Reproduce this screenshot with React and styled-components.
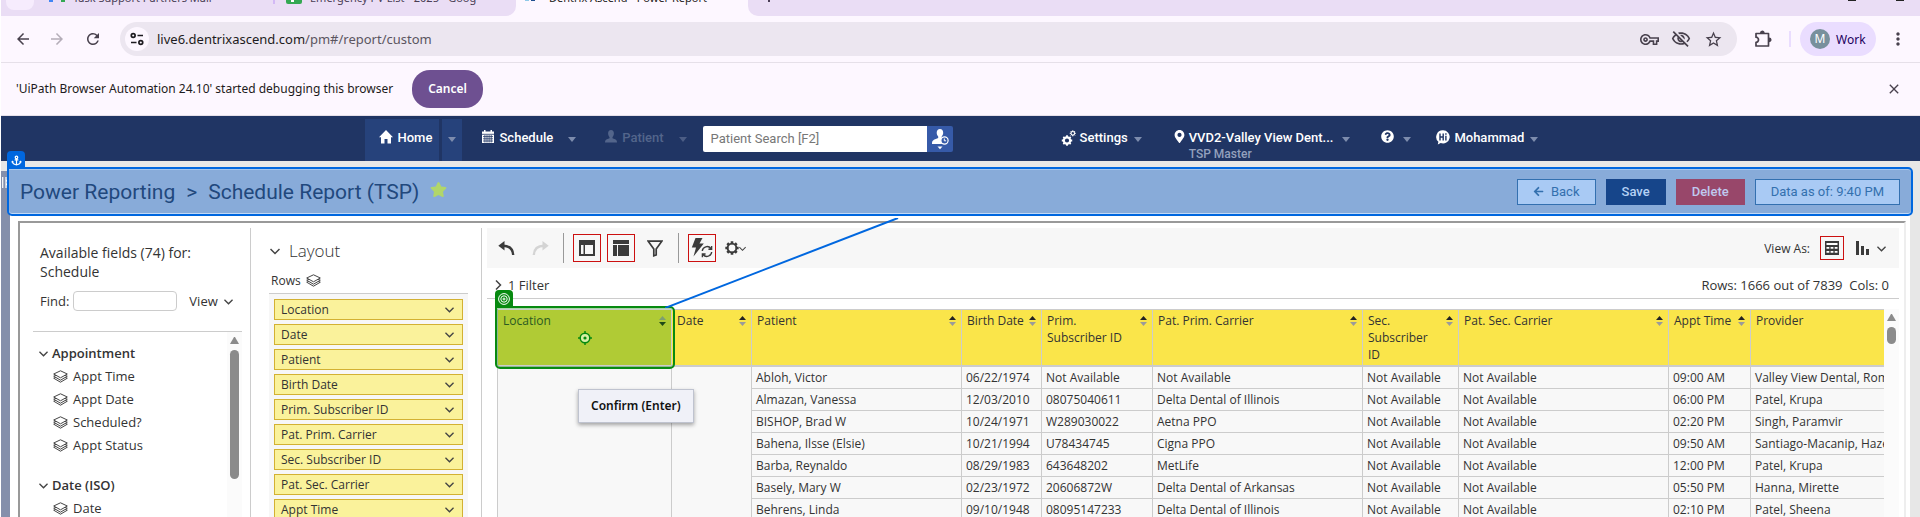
import React from 'react';
import styled, { createGlobalStyle, css } from 'styled-components';
import {
  MdArrowBack, MdArrowForward, MdRefresh, MdOutlineVpnKey, MdOutlineVisibilityOff,
  MdStarOutline, MdMoreVert, MdClose,
} from 'react-icons/md';
import { FaMapMarkerAlt, FaQuestionCircle, FaAnchor, FaStar, FaArrowLeft } from 'react-icons/fa';

const chromeFont = '"Noto Sans", "Open Sans", sans-serif';
const navFont = 'Roboto, "Liberation Sans", sans-serif';
const bodyFont = '"Open Sans", "Noto Sans", sans-serif';

const GlobalStyle = createGlobalStyle`
  * { box-sizing: border-box; }
  body { margin: 0; background: #fff; overflow: hidden; }
  button, input { font: inherit; color: inherit; }
  button { border: 0; padding: 0; background: none; cursor: pointer; }
  ul { list-style: none; margin: 0; padding: 0; }
  svg { display: block; flex: none; }
`;

const Screen = styled.div`
  display: flex;
  flex-direction: column;
  height: 100vh;
  padding-left: 1px;
  overflow: hidden;
  font-family: ${bodyFont};
  font-size: 12px;
  color: #333;
`;

/* ---------- browser window ---------- */

const TabStrip = styled.div`
  display: flex;
  flex: none;
  height: 16px;
  overflow: hidden;
  background: #fdf7ff;
  font: 11px/16px ${chromeFont};
  color: #3b3040;
`;

const TabGroup = styled.div`
  display: flex;
  align-items: flex-start;
  background: #eaddf5;
  ${(p) => (p.$grow ? css`flex: 1; border-bottom-left-radius: 10px; justify-content: space-between;` : css`width: 515px; border-bottom-right-radius: 10px;`)}
`;

const TabSearch = styled.button`
  width: 28px;
  height: 10px;
  margin-left: 5px;
  border-radius: 0 0 8px 8px;
  background: #f6ecfd;
`;

const Tab = styled.div`
  display: flex;
  gap: 8px;
  width: ${(p) => p.$width}px;
  padding-left: ${(p) => p.$pad}px;
  overflow: hidden;
  white-space: nowrap;
  color: ${(p) => (p.$active ? '#1d1b20' : '#4a3d55')};

  span { margin-top: -10px; }
  svg { margin-top: -12px; }
`;

const TabDivider = styled.i`
  width: 2px;
  height: 4px;
  background: #d3b9f5;
`;

const WindowButtons = styled.div`
  display: flex;
  gap: 40px;
  padding-right: 16px;
  i { width: 8px; height: 1px; background: #222; }
`;

const NewTab = styled.button`
  width: 2px;
  height: 2px;
  margin-left: 20px;
  background: #4a3d55;
`;

const BrowserBar = styled.div`
  display: flex;
  flex: none;
  align-items: center;
  height: 47px;
  padding-left: 5px;
  background: #fdf7ff;
  border-bottom: 1px solid #e6e0e9;
  font-family: ${chromeFont};
`;

const BrowserButton = styled.button`
  display: flex;
  align-items: center;
  justify-content: center;
  width: ${(p) => p.$width || 36}px;
  height: 34px;
  color: ${(p) => (p.$muted ? '#b4adb8' : '#48414d')};
`;

const AddressBar = styled.div`
  display: flex;
  flex: 1;
  align-items: center;
  height: 34px;
  margin-left: 9px;
  padding: 0 8px 0 5px;
  border-radius: 17px;
  background: #ece6f0;
`;

const SiteInfo = styled.button`
  display: flex;
  align-items: center;
  justify-content: center;
  width: 24px;
  height: 24px;
  margin-right: 8px;
  border-radius: 12px;
  background: #fdf7ff;
  color: #1d1b20;
`;

const Address = styled.div`
  flex: 1;
  font-size: 13px;
  line-height: 20px;
  color: #5b5560;
  b { font-weight: 400; color: #1d1b20; }
`;

const BarDivider = styled.i`
  width: 2px;
  height: 16px;
  margin-right: 9px;
  background: #eaddff;
`;

const Profile = styled.button`
  display: flex;
  align-items: center;
  gap: 6px;
  width: 76px;
  height: 34px;
  padding-left: 10px;
  border-radius: 17px;
  background: #eaddff;
  color: #21005d;
  font-size: 12px;
`;

const Avatar = styled.span`
  width: 20px;
  height: 20px;
  border-radius: 10px;
  background: #78909c;
  color: #fff;
  line-height: 20px;
`;

const InfoBar = styled.div`
  display: flex;
  flex: none;
  align-items: center;
  height: 53px;
  padding: 0 12px 0 15px;
  background: #fdf7ff;
  border-bottom: 1px solid #e6e0e9;
  font: 12px/20px ${chromeFont};
  color: #1d1b20;
`;

const CancelButton = styled.button`
  height: 38px;
  margin: 0 auto 0 19px;
  padding: 0 16px;
  border-radius: 18px;
  background: #6e5091;
  color: #fff;
  font-weight: 600;
`;

/* ---------- application header ---------- */

const Nav = styled.nav`
  display: flex;
  flex: none;
  justify-content: center;
  height: 45px;
  background: #203564;
  font: 500 13px/16px ${navFont};
  color: #fff;
`;

const NavInner = styled.div`
  display: flex;
  flex: 0 1 1192px;
  padding-top: 3px;
`;

const NavItem = styled.a`
  display: flex;
  align-items: flex-start;
  gap: ${(p) => p.$gap || 5}px;
  margin-left: ${(p) => p.$before || 0}px;
  padding-top: 11px;
  white-space: nowrap;
  color: ${(p) => (p.$muted ? '#53658b' : '#fff')};
  text-decoration: none;
  ${(p) => p.$current && css`width: 74px; padding-left: 14px; background: #26427b;`}

  small { display: block; font-size: 12px; line-height: 16px; color: #93a0bd; }
`;

const NavCaret = styled.button`
  display: flex;
  justify-content: center;
  width: 20px;
  margin-left: ${(p) => p.$before || 0}px;
  padding-top: 18px;
  background: ${(p) => (p.$current ? '#26427b' : 'none')};

  &::after {
    content: '';
    border: 4px solid transparent;
    border-top: 5px solid ${(p) => (p.$muted ? '#4c5d85' : '#7d8cad')};
    border-bottom: 0;
  }
`;

const Search = styled.div`
  display: flex;
  height: 26px;
  margin: 7px 0 0 10px;
`;

const SearchInput = styled.input`
  width: 224px;
  padding: 0 8px;
  border: 0;
  border-radius: 2px 0 0 2px;
  background: #fff;
  font-size: 13px;
  font-weight: 400;
  color: #333;
  &::placeholder { color: #777; }
`;

const SearchButton = styled.button`
  width: 26px;
  border-radius: 0 2px 2px 0;
  background: #365aa8;
`;

/* ---------- workspace ---------- */

const Workspace = styled.div`
  display: flex;
  flex: 1;
  min-height: 0;
  background: #e7e7e7;
`;

const Rail = styled.aside`
  width: 9px;
  flex: none;
  margin-top: 10px;
  padding: 6px 0 0 1px;
  background: #848fab;
`;

const Main = styled.main`
  display: flex;
  flex: 1;
  flex-direction: column;
  min-width: 0;
  margin: 6px 10px 0 0;
  background: #fff;
`;

const TitleBar = styled.header`
  position: relative;
  display: flex;
  flex: none;
  align-items: center;
  gap: 10px;
  height: 49px;
  margin: 0 -3px;
  padding: 0 11px;
  border: 2px solid #0067df;
  border-radius: 0 5px 5px 5px;
  background: #88abd9;
  box-shadow: inset 0 1px 0 #a9c6ea, inset 0 -1px 0 #c4daf6;
  font: 13px/16px ${navFont};
`;

const Badge = styled.span`
  position: absolute;
  left: -2px;
  bottom: 100%;
  display: flex;
  align-items: center;
  justify-content: center;
  width: 18px;
  height: 18px;
  border-radius: 4px 4px 0 0;
  background: ${(p) => p.$color};
  color: #fff;
`;

const Title = styled.h1`
  display: flex;
  gap: 11px;
  margin: 0 auto 0 0;
  font-size: 21px;
  line-height: 28px;
  font-weight: 400;
  color: #21487d;
  svg { color: #b1d66a; margin-top: 3px; }
`;

const tones = {
  plain: css`border: 1px solid #3370b0; background: #a9caf4; color: #3370ae;`,
  save: css`background: #16458a; color: #b5d1f5; font-weight: 500;`,
  remove: css`background: #98476a; color: #bfc9ef; font-weight: 500;`,
};

const ActionButton = styled.button`
  display: flex;
  align-items: center;
  gap: 7px;
  height: 26px;
  padding: 0 ${(p) => (p.$tone === 'plain' ? 15 : 16)}px;
  ${(p) => tones[p.$tone]}
`;

const Frame = styled.div`
  display: flex;
  flex: 1;
  min-height: 0;
  margin: 5px 4px 0 8px;
  padding: 5px 5px 0 13px;
  border: 2px solid #999;
  border-right-color: #eee;
  border-bottom: 0;
`;

const FieldsPanel = styled.section`
  width: 217px;
  flex: none;
  padding-right: 8px;
`;

const PanelTitle = styled.h2`
  margin: 0;
  padding: 15px 0 0 7px;
  font-size: 14px;
  line-height: 19px;
  font-weight: 400;
`;

const FindRow = styled.div`
  display: flex;
  align-items: center;
  height: 50px;
  padding: 0 0 10px 7px;
  font-size: 13px;
`;

const FindInput = styled.input`
  width: 104px;
  height: 20px;
  margin: 0 12px 0 4px;
  border: 1px solid #ccc;
  border-radius: 4px;
`;

const ViewButton = styled.button`
  display: flex;
  align-items: center;
  gap: 6px;
`;

const FieldTree = styled.div`
  display: flex;
  height: 200px;
  border-top: 1px solid #ccc;
`;

const Groups = styled.div`
  flex: 1;
  padding-top: 10px;
`;

const Group = styled.div`
  margin-bottom: 17px;
  font-size: 13px;
  line-height: 23px;
  h3 {
    display: flex;
    align-items: center;
    gap: 4px;
    margin: 0 0 0 6px;
    font-size: 13px;
    font-weight: 600;
  }
  li { display: flex; align-items: center; gap: 5px; padding-left: 20px; }
`;

const Scroller = styled.div`
  width: 15px;
  flex: none;
  padding: 5px 3px;
  background: #fbfbfb;
  &::before {
    content: '';
    display: block;
    border: 4px solid transparent;
    border-bottom: 7px solid #8b8b8b;
    border-top: 0;
  }
  &::after {
    content: '';
    display: block;
    width: 9px;
    height: ${(p) => p.$thumb}px;
    margin-top: 6px;
    border-radius: 5px;
    background: #8b8b8b;
  }
`;

const LayoutPanel = styled.section`
  display: flex;
  flex: none;
  flex-direction: column;
  width: 232px;
  padding: 0 13px 0 18px;
  border: solid #ccc;
  border-width: 0 1px;
`;

const LayoutTitle = styled.h2`
  display: flex;
  flex: none;
  align-items: center;
  gap: 9px;
  height: 36px;
  margin: 0;
  padding: 10px 0 0 1px;
  font-size: 17px;
  line-height: 26px;
  font-weight: 300;
`;

const RowsLabel = styled.div`
  display: flex;
  flex: none;
  align-items: center;
  gap: 5px;
  height: 30px;
  padding: 4px 0 0 2px;
  border-bottom: 1px solid #ccc;
`;

const PillList = styled.ul`
  flex: 1;
  padding: 5px;
  background: #f7f7f7;
`;

const Pill = styled.button`
  display: flex;
  align-items: center;
  justify-content: space-between;
  width: 100%;
  height: 21px;
  margin-bottom: 4px;
  padding: 0 8px 0 6px;
  border: 1px solid #d3b132;
  background: #faf29b;
`;

const Report = styled.section`
  flex: 1;
  min-width: 0;
  padding-left: 5px;
`;

const Toolbar = styled.div`
  display: flex;
  align-items: center;
  height: 40px;
  padding: 0 13px 0 11px;
  background: #f7f7f7;
`;

const Tool = styled.button`
  display: flex;
  align-items: center;
  justify-content: center;
  width: ${(p) => p.$size || 28}px;
  height: ${(p) => p.$size || 28}px;
  margin-left: ${(p) => p.$before || 0}px;
  border: 1px solid ${(p) => (p.$on ? '#cc1010' : 'transparent')};
  color: #3b3b3b;
`;

const ToolSeparator = styled.i`
  width: 1px;
  height: 30px;
  margin: 0 9px 0 ${(p) => p.$before || 9}px;
  background: #999;
`;

const ViewAs = styled.div`
  display: flex;
  align-items: center;
  margin-left: auto;
`;

const FilterRow = styled.div`
  display: flex;
  align-items: center;
  justify-content: space-between;
  height: 31px;
  padding: 4px 10px 0 6px;
  border-bottom: 1px solid #ccc;
  font-size: 13px;
  white-space: pre;
`;

const FilterToggle = styled.button`
  display: flex;
  align-items: center;
  gap: 5px;
`;

const Grid = styled.div`
  display: flex;
  padding: 10px 0 0 10px;
`;

const Table = styled.table`
  flex: 1;
  min-width: 0;
  width: 100%;
  table-layout: fixed;
  border-collapse: separate;
  border-spacing: 0;
  line-height: 17px;
`;

const Th = styled.th`
  position: relative;
  height: 58px;
  padding: 2px 5px 0;
  border: solid #ccc;
  border-width: 1px 0 2px 1px;
  background: ${(p) => (p.$target ? '#b0cb35' : '#fae54a')};
  color: ${(p) => (p.$target ? '#2b5a22' : '#333')};
  font-weight: 400;
  text-align: left;
  vertical-align: top;
`;

const ThContent = styled.div`
  display: flex;
  justify-content: space-between;
  gap: 5px;
  svg { margin-top: 4px; }
`;

const Td = styled.td`
  height: 22px;
  padding: 0 0 0 4px;
  border: solid #ccc;
  border-width: 0 0 1px 1px;
  background: #f8f8f8;
  overflow: hidden;
  white-space: nowrap;
`;

const TargetOutline = styled.div`
  position: absolute;
  inset: -4px -4px -4px -3px;
  z-index: 2;
  display: flex;
  align-items: center;
  justify-content: center;
  border: 2px solid #078a10;
  border-radius: 0 5px 5px 5px;
  box-shadow: inset 0 1px 0 #a9d7a9, inset 0 -1px 0 #8fb88f, inset 1px 0 0 #8fb88f;
`;

const Connector = styled.svg`
  position: absolute;
  left: 168px;
  bottom: 100%;
`;

const Tooltip = styled.div`
  position: absolute;
  left: 81px;
  top: 81px;
  padding: 8px 12px;
  border: 1px solid #bfc3cf;
  background: #f0f1f8;
  box-shadow: 0 2px 4px rgba(0, 0, 0, 0.35);
  font: 600 12px/16px ${chromeFont};
  color: #111;
  white-space: nowrap;
`;

/* ---------- drawings ---------- */

const Chevron = ({ size = 9, right }) => (
  <svg width={size} height={size} viewBox="0 0 10 10" fill="none" stroke="#444" strokeWidth="1.5">
    <path d={right ? 'M3 0.5 7.5 5 3 9.5' : 'M0.5 3 5 7.5 9.5 3'} />
  </svg>
);

const Layers = () => (
  <svg width="15" height="13" viewBox="0 0 15 13" fill="#fff" stroke="#444" strokeWidth="1">
    <path d="M.7 8.2 7.5 12.2 14.3 8.2 7.5 5.4z" />
    <path d="M.7 6.2 7.5 10.2 14.3 6.2 7.5 3.4z" />
    <path d="M.7 4 7.5 7.8 14.3 4 7.5 .8z" />
  </svg>
);

const SortArrows = ({ down }) => (
  <svg width="7" height="10" viewBox="0 0 7 10">
    <path d="M0 4 3.5 0 7 4z" fill={down ? '#7d9f70' : '#222'} />
    <path d="M0 6 3.5 10 7 6z" fill={down ? '#1f4a17' : '#9a9a9a'} />
  </svg>
);

const Tune = () => (
  <svg width="14" height="14" viewBox="0 0 14 14" fill="none" stroke="currentColor" strokeWidth="1.7">
    <circle cx="3.2" cy="3.5" r="1.9" />
    <path d="M7.5 3.5H13M1 10.5h5.5" />
    <circle cx="10.8" cy="10.5" r="1.9" />
  </svg>
);

const Extension = () => (
  <svg width="18" height="18" viewBox="0 0 18 18" fill="none" stroke="currentColor" strokeWidth="1.7" strokeLinejoin="round">
    <path d="M2 3.500h12.500V16H2v-3.700c1.500 0 2.500-1.100 2.500-2.500S3.500 7.200 2 7.200z" />
    <path d="M6.800 3a1.500 1.700 0 0 1 3 0zM15 8.300a1.700 1.500 0 0 1 0 3z" fill="currentColor" />
  </svg>
);

const House = () => (
  <svg width="14" height="14" viewBox="0 0 14 14" fill="#fff">
    <path d="M7 0 14 7.300h-2V13.500H8.500V9h-3v4.500H2V7.300H0z" />
  </svg>
);

const Person = () => (
  <svg width="12" height="13" viewBox="0 0 12 13" fill="currentColor">
    <path d="M6 0c1.900 0 2.900 1.400 2.900 3.400 0 1.600-.7 2.800-1.400 3.500v1.300c1.500.8 4.100 1.200 4.300 2.800L12 12.500H0L.2 11c.2-1.600 2.800-2 4.300-2.800V6.900C3.800 6.200 3.100 5 3.100 3.400 3.100 1.400 4.100 0 6 0z" />
  </svg>
);

const Calendar = () => (
  <svg width="12" height="13" viewBox="0 0 12 13">
    <path fill="#fff" d="M0 1.5h2V0h1.5v1.5h5V0H10v1.5h2V13H0z" />
    <path stroke="#203564" strokeWidth=".8" d="M0 4.3h12M1 6.6h10M1 8.8h10M1 11h10M2.9 5v7.5M5 5v7.5M7.1 5v7.5M9.2 5v7.5" />
  </svg>
);

const gearPath = (cx, cy, r, teeth) =>
  Array.from({ length: teeth }, (_, i) => {
    const a = (i * 2 * Math.PI) / teeth;
    const x = Math.cos(a);
    const y = Math.sin(a);
    return `M${cx + x * r * 0.8} ${cy + y * r * 0.8}L${cx + x * r * 1.45} ${cy + y * r * 1.45}`;
  }).join('');

const Cogs = () => (
  <svg width="15" height="16" viewBox="0 0 15 16" fill="none" stroke="#fff">
    <circle cx="6" cy="10.5" r="3.2" strokeWidth="2.2" />
    <path d={gearPath(6, 10.5, 3.6, 8)} strokeWidth="1.8" />
    <circle cx="11.8" cy="3.3" r="1.8" strokeWidth="1.1" />
    <path d={gearPath(11.8, 3.3, 2.1, 8)} strokeWidth="1" />
  </svg>
);

const Gear = () => (
  <svg width="14" height="14" viewBox="0 0 14 14" fill="none" stroke="#3b3b3b">
    <circle cx="7" cy="7" r="4.4" strokeWidth="1.9" />
    <path d={gearPath(7, 7, 4.6, 8)} strokeWidth="2.6" />
  </svg>
);

const HiBubble = () => (
  <svg width="14" height="15" viewBox="0 0 14 15">
    <path fill="#fff" d="M7 .3a6.7 6.6 0 1 1-2.3 12.8L1.8 14.6l.6-2.8A6.6 6.6 0 0 1 7 .3z" />
    <path fill="none" stroke="#203564" strokeWidth="1.4" d="M4 3.5v7M7.2 3.5v7M4 7h3.2M9.9 5.8v4.7M9.9 3.3v1.4" />
  </svg>
);

const PatientClock = () => (
  <svg width="26" height="26" viewBox="0 0 26 26">
    <path fill="#fff" d="M13 3c2 0 3.200 1.500 3.200 3.700 0 1.800-.9 3-1.500 3.800v1.500c1.500.800 3.300 1.300 4.300 2.500V18H5c0-3.500 1-4 6.200-6v-1.500c-.7-.8-1.500-2-1.500-3.800C9.700 4.500 11 3 13 3z" />
    <circle cx="17.500" cy="14.500" r="3.600" fill="#365aa8" stroke="#fff" strokeWidth="1.200" />
    <path fill="none" stroke="#fff" d="M17.300 12.500v2.300h1.800" />
    <path fill="#fff" d="M10.500 20.500h5L13 23.200z" />
  </svg>
);

const Undo = ({ color, flip }) => (
  <svg width="17" height="15" viewBox="0 0 17 15">
    <g transform={flip ? 'matrix(-1 0 0 1 17 0)' : undefined}>
      <path d="M4 4.800C10.500 4.500 14.800 7.500 15.200 14" fill="none" stroke={color} strokeWidth="2.400" />
      <path d="M6.500 0v9.600L.300 4.700z" fill={color} />
    </g>
  </svg>
);

const PanelLeft = () => (
  <svg width="16" height="16" viewBox="0 0 16 16" fill="#3b3b3b" fillRule="evenodd">
    <path d="M0 0h16v16H0zM2 5v9h2.500V5zM6 5v9h8V5z" />
  </svg>
);

const PanelTop = () => (
  <svg width="16" height="16" viewBox="0 0 16 16" fill="#3b3b3b">
    <path d="M0 0h16v4H0zM0 5h4v11H0zM5 5h11v11H5z" />
  </svg>
);

const Funnel = () => (
  <svg width="16" height="17" viewBox="0 0 16 17" fill="none" stroke="#3b3b3b" strokeWidth="1.700">
    <path d="M1.200 1.200h13.600L9.200 9v6L6.800 15.800V9z" />
  </svg>
);

const AutoRefresh = () => (
  <svg width="22" height="20" viewBox="0 0 22 20">
    <path fill="#3b3b3b" d="M4.500 0h7L8.500 5.500h4.300L2.500 18.500 5 9.500H.800z" />
    <g fill="none" stroke="#3b3b3b" strokeWidth="1.400">
      <path d="M11.300 13a4.800 4.800 0 0 1 8.600-2.500M20.600 8v3.200h-3.200" />
      <path d="M20.700 14a4.800 4.800 0 0 1-8.600 2.500M11.400 19.200V16h3.200" />
    </g>
  </svg>
);

const GridIcon = () => (
  <svg width="14" height="14" viewBox="0 0 14 14">
    <path fill="#3b3b3b" d="M0 0h14v14H0z" />
    <path fill="#fff" d="M1.500 2h11v2h-11zM1.500 6h2.800v1.800H1.500zM5.600 6h2.800v1.800H5.600zM9.700 6h2.800v1.800H9.700zM1.500 10h2.800v1.800H1.500zM5.600 10h2.800v1.800H5.600zM9.700 10h2.800v1.800H9.700z" />
  </svg>
);

const Bars = () => (
  <svg width="13" height="14" viewBox="0 0 13 14" fill="#3b3b3b">
    <path d="M0 0h3v14H0zM5 5h3v9H5zM10 8h3v6h-3z" />
  </svg>
);

const Crosshair = () => (
  <svg width="14" height="14" viewBox="0 0 14 14" fill="none" stroke="#078a10" strokeWidth="1.500">
    <circle cx="7" cy="7" r="4.800" fill="#d7f0a6" />
    <path d="M7 0v2.500M7 11.500V14M0 7h2.500M11.500 7H14" />
    <circle cx="7" cy="7" r="1.600" fill="#078a10" stroke="none" />
  </svg>
);

const Rings = () => (
  <svg width="12" height="12" viewBox="0 0 12 12" fill="none" stroke="#fff">
    <circle cx="6" cy="6" r="5.400" />
    <circle cx="6" cy="6" r="3.200" />
    <circle cx="6" cy="6" r="1" />
  </svg>
);

/* ---------- data ---------- */

const groups = [
  { name: 'Appointment', fields: ['Appt Time', 'Appt Date', 'Scheduled?', 'Appt Status'] },
  { name: 'Date (ISO)', fields: ['Date'] },
];

const columns = [
  { name: 'Location', width: 174 },
  { name: 'Date', width: 80 },
  { name: 'Patient', width: 210 },
  { name: 'Birth Date', width: 80 },
  { name: 'Prim. Subscriber ID', width: 111 },
  { name: 'Pat. Prim. Carrier', width: 210 },
  { name: 'Sec. Subscriber ID', width: 96 },
  { name: 'Pat. Sec. Carrier', width: 210 },
  { name: 'Appt Time', width: 82 },
  { name: 'Provider' },
];

const NA = 'Not Available';
const rows = [
  ['Abloh, Victor', '06/22/1974', NA, NA, NA, NA, '09:00 AM', 'Valley View Dental, Romeoville'],
  ['Almazan, Vanessa', '12/03/2010', '08075040611', 'Delta Dental of Illinois', NA, NA, '06:00 PM', 'Patel, Krupa'],
  ['BISHOP, Brad W', '10/24/1971', 'W289030022', 'Aetna PPO', NA, NA, '02:20 PM', 'Singh, Paramvir'],
  ['Bahena, Ilsse (Elsie)', '10/21/1994', 'U78434745', 'Cigna PPO', NA, NA, '09:50 AM', 'Santiago-Macanip, Hazel'],
  ['Barba, Reynaldo', '08/29/1983', '643648202', 'MetLife', NA, NA, '12:00 PM', 'Patel, Krupa'],
  ['Basely, Mary W', '02/23/1972', '20606872W', 'Delta Dental of Arkansas', NA, NA, '05:50 PM', 'Hanna, Mirette'],
  ['Behrens, Linda', '09/10/1948', '08095147233', 'Delta Dental of Illinois', NA, NA, '02:10 PM', 'Patel, Sheena'],
];

/* ---------- sections ---------- */

const Browser = () => (
  <>
    <TabStrip>
      <TabGroup>
        <TabSearch aria-label="Search tabs" />
        <Tab $width={239} $pad={15}>
          <svg width="16" height="16" viewBox="0 0 16 16">
            <path fill="#4285f4" d="M0 5h4v9H0z" />
            <path fill="#34a853" d="M12 5h4v9h-4z" />
          </svg>
          <span>Task Support Partners Mail</span>
        </Tab>
        <TabDivider />
        <Tab $width={210} $pad={11}>
          <svg width="16" height="16" viewBox="0 0 16 16">
            <rect width="16" height="16" rx="2" fill="#34a853" />
            <path fill="#fff" d="M5 5h6v2H8v7H5z" />
          </svg>
          <span>Emergency PV List - 2025 - Goog</span>
        </Tab>
      </TabGroup>
      <Tab $width={232} $pad={9} $active>
        <svg width="16" height="16" viewBox="0 0 16 16">
          <path fill="#8fc9e8" d="M0 8h4v5H0z" />
          <path fill="#1f4f8f" d="M6 8h4v5H6z" />
        </svg>
        <span>Dentrix Ascend - Power Report</span>
      </Tab>
      <TabGroup $grow>
        <NewTab aria-label="New tab" />
        <WindowButtons><i /><i /></WindowButtons>
      </TabGroup>
    </TabStrip>
    <BrowserBar>
      <BrowserButton aria-label="Back" $width={33}><MdArrowBack size={18} /></BrowserButton>
      <BrowserButton aria-label="Forward" $muted><MdArrowForward size={18} /></BrowserButton>
      <BrowserButton aria-label="Reload"><MdRefresh size={18} /></BrowserButton>
      <AddressBar>
        <SiteInfo aria-label="Site information"><Tune /></SiteInfo>
        <Address><b>live6.dentrixascend.com</b>/pm#/report/custom</Address>
        <BrowserButton aria-label="Passwords" $width={32}><MdOutlineVpnKey size={19} /></BrowserButton>
        <BrowserButton aria-label="Tracking" $width={32}><MdOutlineVisibilityOff size={20} /></BrowserButton>
        <BrowserButton aria-label="Bookmark" $width={32}><MdStarOutline size={19} /></BrowserButton>
      </AddressBar>
      <BrowserButton aria-label="Extensions" $width={52}><Extension /></BrowserButton>
      <BarDivider />
      <Profile><Avatar>M</Avatar>Work</Profile>
      <BrowserButton aria-label="Menu" $width={44}><MdMoreVert size={20} /></BrowserButton>
    </BrowserBar>
    <InfoBar>
      'UiPath Browser Automation 24.10' started debugging this browser
      <CancelButton>Cancel</CancelButton>
      <BrowserButton aria-label="Close" $width={28}><MdClose size={16} /></BrowserButton>
    </InfoBar>
  </>
);

const AppNav = () => (
  <Nav>
    <NavInner>
      <NavItem href="#home" $current><House />Home</NavItem>
      <NavCaret aria-label="Home menu" $before={3} $current />
      <NavItem href="#schedule" $before={20} $gap={6}><Calendar />Schedule</NavItem>
      <NavCaret aria-label="Schedule menu" $before={9} />
      <NavItem href="#patient" $before={23} $muted><Person />Patient</NavItem>
      <NavCaret aria-label="Patient menu" $before={9} $muted />
      <Search>
        <SearchInput aria-label="Patient Search" placeholder="Patient Search [F2]" />
        <SearchButton aria-label="Recent patients"><PatientClock /></SearchButton>
      </Search>
      <NavItem href="#settings" $before={108} $gap={4}><Cogs />Settings</NavItem>
      <NavCaret aria-label="Settings menu" />
      <NavItem href="#location" $before={25} $gap={3}>
        <FaMapMarkerAlt size={13} />
        <span>VVD2-Valley View Dent...<small>TSP Master</small></span>
      </NavItem>
      <NavCaret aria-label="Location menu" $before={3} />
      <NavItem href="#help" $before={25}><FaQuestionCircle size={13} /></NavItem>
      <NavCaret aria-label="Help menu" $before={3} />
      <NavItem href="#account" $before={19} $gap={4}><HiBubble />Mohammad</NavItem>
      <NavCaret aria-label="Account menu" />
    </NavInner>
  </Nav>
);

const Fields = () => (
  <FieldsPanel>
    <PanelTitle>Available fields (74) for:<br />Schedule</PanelTitle>
    <FindRow>
      <label htmlFor="find">Find:</label>
      <FindInput id="find" />
      <ViewButton>View <Chevron /></ViewButton>
    </FindRow>
    <FieldTree>
      <Groups>
        {groups.map((g) => (
          <Group key={g.name}>
            <h3><Chevron />{g.name}</h3>
            <ul>{g.fields.map((f) => <li key={f}><Layers />{f}</li>)}</ul>
          </Group>
        ))}
      </Groups>
      <Scroller $thumb={129} />
    </FieldTree>
  </FieldsPanel>
);

const ReportTable = () => (
  <Grid>
    <Table>
      <colgroup>{columns.map((c) => <col key={c.name} width={c.width} />)}</colgroup>
      <thead>
        <tr>
          {columns.map((c, i) => (
            <Th key={c.name} $target={i === 0}>
              <ThContent>{c.name}{c.width && <SortArrows down={i === 0} />}</ThContent>
              {i === 0 && (
                <TargetOutline>
                  <Badge $color="#078a10"><Rings /></Badge>
                  <Crosshair />
                  <Connector width="236" height="90" viewBox="0 0 236 90">
                    <path d="M0 90 233 0" stroke="#0067df" strokeWidth="2" />
                  </Connector>
                  <Tooltip role="tooltip">Confirm (Enter)</Tooltip>
                </TargetOutline>
              )}
            </Th>
          ))}
        </tr>
      </thead>
      <tbody>
        {rows.map((r, i) => (
          <tr key={r[0]}>
            {i === 0 && <><Td rowSpan={rows.length} /><Td rowSpan={rows.length} /></>}
            {r.map((v, j) => <Td key={j}>{v}</Td>)}
          </tr>
        ))}
      </tbody>
    </Table>
    <Scroller $thumb={17} />
  </Grid>
);

export default function App() {
  return (
    <Screen>
      <GlobalStyle />
      <Browser />
      <AppNav />
      <Workspace>
        <Rail>
          <svg width="6" height="11" viewBox="0 0 6 11"><path d="M.7 0v11M4 0v11M4.500 3l1.500 2.500L4.500 8" stroke="#fff" strokeWidth="1.200" fill="none" /></svg>
        </Rail>
        <Main>
          <TitleBar>
            <Badge $color="#0067df"><FaAnchor size={11} /></Badge>
            <Title><span>Power Reporting</span><span>&gt;</span><span>Schedule Report (TSP)</span><FaStar size={17} /></Title>
            <ActionButton $tone="plain"><FaArrowLeft size={11} />Back</ActionButton>
            <ActionButton $tone="save">Save</ActionButton>
            <ActionButton $tone="remove">Delete</ActionButton>
            <ActionButton $tone="plain">Data as of: 9:40 PM</ActionButton>
          </TitleBar>
          <Frame>
            <Fields />
            <LayoutPanel>
              <LayoutTitle><Chevron size={10} />Layout</LayoutTitle>
              <RowsLabel>Rows <Layers /></RowsLabel>
              <PillList>
                {columns.slice(0, 9).map((c) => (
                  <li key={c.name}><Pill>{c.name}<Chevron /></Pill></li>
                ))}
              </PillList>
            </LayoutPanel>
            <Report>
              <Toolbar>
                <Tool aria-label="Undo" $size={17}><Undo color="#3b3b3b" /></Tool>
                <Tool aria-label="Redo" $size={17} $before={17}><Undo color="#d4d4d4" flip /></Tool>
                <ToolSeparator $before={14} />
                <Tool aria-label="Fields panel" $on><PanelLeft /></Tool>
                <Tool aria-label="Layout panel" $on $before={6}><PanelTop /></Tool>
                <Tool aria-label="Filter" $before={6}><Funnel /></Tool>
                <ToolSeparator />
                <Tool aria-label="Auto refresh" $on><AutoRefresh /></Tool>
                <Tool aria-label="Options" $before={5}><Gear /><Chevron size={7} /></Tool>
                <ViewAs>
                  View As:
                  <Tool aria-label="Table" $on $size={24} $before={10}><GridIcon /></Tool>
                  <Tool aria-label="Chart" $size={24} $before={6}><Bars /></Tool>
                  <Tool aria-label="Chart types" $size={9} $before={3}><Chevron /></Tool>
                </ViewAs>
              </Toolbar>
              <FilterRow>
                <FilterToggle><Chevron size={10} right />1 Filter</FilterToggle>
                <span>Rows: 1666 out of 7839  Cols: 0</span>
              </FilterRow>
              <ReportTable />
            </Report>
          </Frame>
        </Main>
      </Workspace>
    </Screen>
  );
}
